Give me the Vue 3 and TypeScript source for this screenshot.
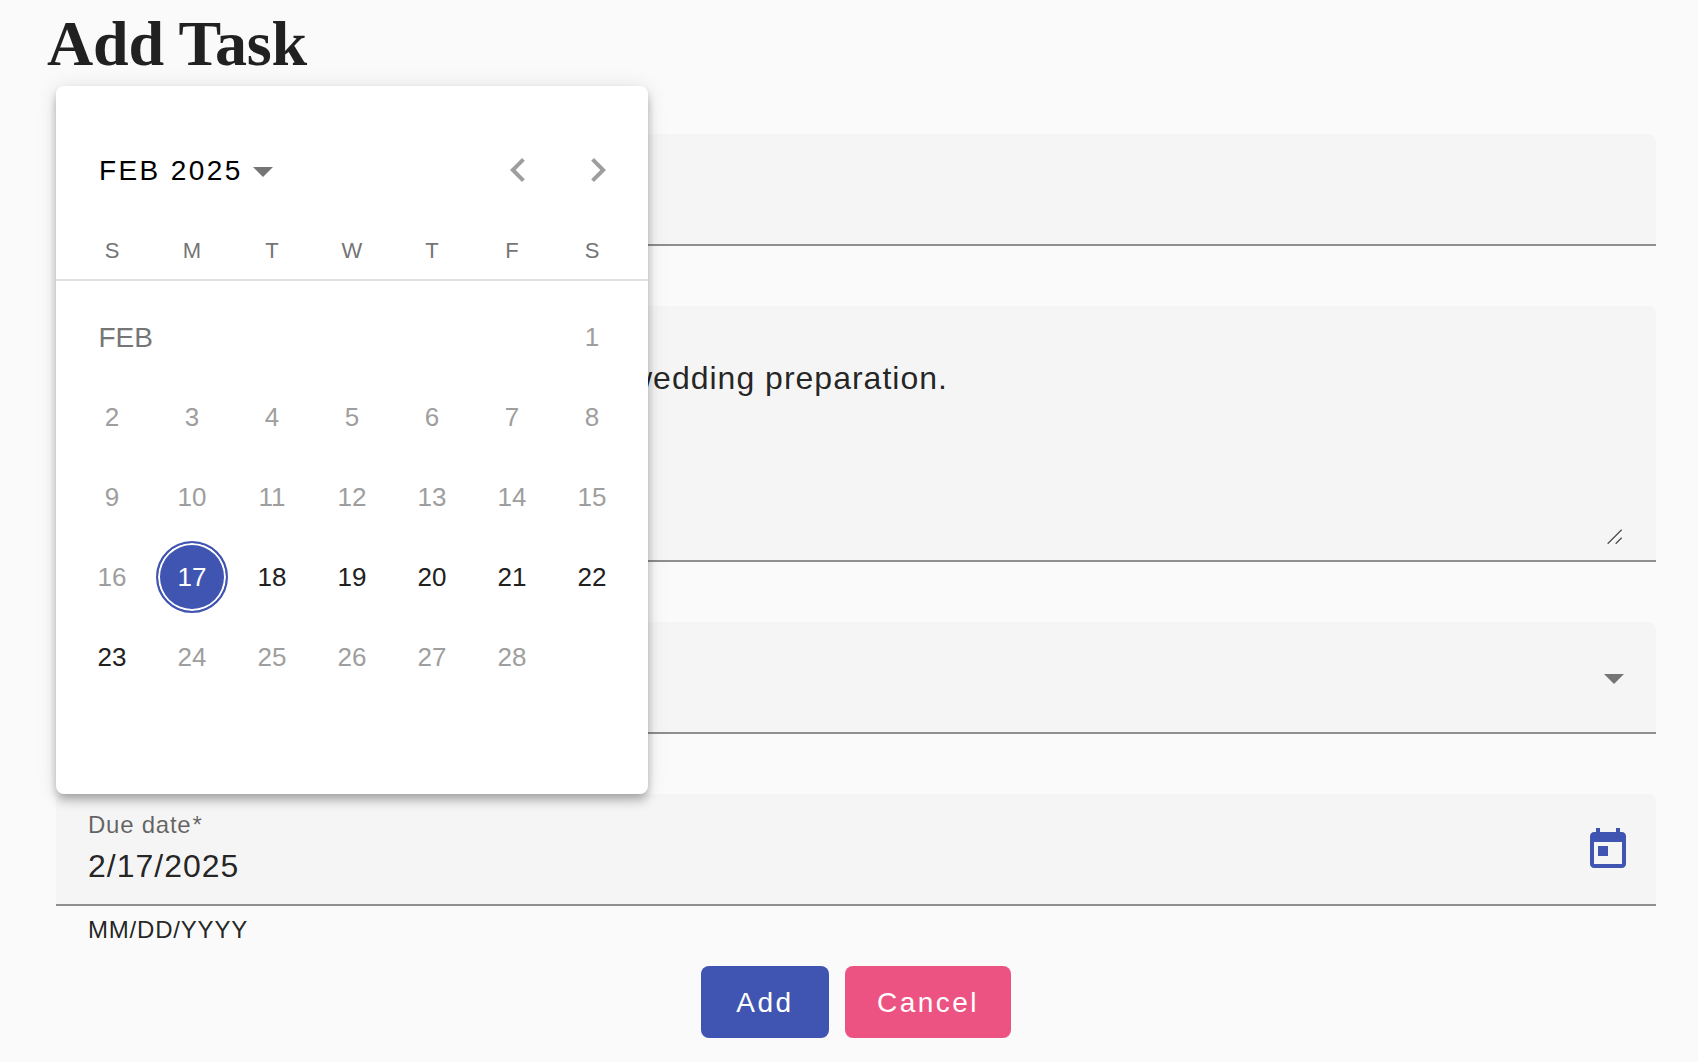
<script setup lang="ts">
interface DayCell {
  day: number
  enabled: boolean
  selected: boolean
}

const weekdays: string[] = ['S', 'M', 'T', 'W', 'T', 'F', 'S']
const today = 17
const lastEnabled = 23

const days: DayCell[] = Array.from({ length: 28 }, (_, i) => {
  const day = i + 1
  return { day, enabled: day >= today && day <= lastEnabled, selected: day === today }
})
</script>

<template>
  <main class="page">
    <h1 class="title">Add Task</h1>

    <form class="form" @submit.prevent>
      <div class="field"></div>

      <div class="field area">
        <p class="area-text">wedding preparation.</p>
        <svg class="grip" width="16" height="16" viewBox="0 0 16 16">
          <path d="M1.9 15.6 15.6 1.9M9.9 15.6 15.6 9.9" stroke="#fff" stroke-width="1.4" />
          <path d="M.7 14.7 14.7.7M8.7 14.7 14.7 8.7" stroke="#555" stroke-width="1.5" />
        </svg>
      </div>

      <div class="field select">
        <svg class="caret" width="20" height="10" viewBox="0 0 20 10"><path d="M0 0h20L10 10z" /></svg>
      </div>

      <div class="field date">
        <div class="date-text">
          <label class="label">Due date<span class="star">*</span></label>
          <span class="value">2/17/2025</span>
        </div>
        <svg class="calendar-icon" width="48" height="48" viewBox="0 0 24 24">
          <path
            d="M19 3h-1V1h-2v2H8V1H6v2H5c-1.11 0-1.99.9-1.99 2L3 19c0 1.1.89 2 2 2h14c1.1 0 2-.9 2-2V5c0-1.1-.9-2-2-2zm0 16H5V8h14v11zM7 10h5v5H7z"
          />
        </svg>
      </div>
      <div class="hint">MM/DD/YYYY</div>

      <div class="actions">
        <button class="btn primary" type="submit">Add</button>
        <button class="btn accent" type="button">Cancel</button>
      </div>
    </form>

    <section class="picker">
      <header class="picker-header">
        <span class="period">FEB 2025</span>
        <svg class="caret" width="20" height="10" viewBox="0 0 20 10"><path d="M0 0h20L10 10z" /></svg>
        <span class="spacer"></span>
        <span class="nav">
          <svg width="48" height="48" viewBox="0 0 24 24">
            <path d="M15.41 7.41 14 6l-6 6 6 6 1.41-1.41L10.83 12z" />
          </svg>
        </span>
        <span class="nav">
          <svg width="48" height="48" viewBox="0 0 24 24">
            <path d="M8.59 16.59 10 18l6-6-6-6-1.41 1.41L13.17 12z" />
          </svg>
        </span>
      </header>
      <div class="weekdays">
        <span v-for="(name, i) in weekdays" :key="i">{{ name }}</span>
      </div>
      <div class="grid">
        <span class="month">FEB</span>
        <span v-for="cell in days" :key="cell.day" class="cell" :class="{ enabled: cell.enabled }">
          <span class="day" :class="{ selected: cell.selected }">{{ cell.day }}</span>
        </span>
      </div>
    </section>
  </main>
</template>

<style>
body {
  margin: 0;
  background: #fafafa;
}
</style>

<style scoped>
.page {
  position: relative;
  box-sizing: border-box;
  height: 1062px;
  overflow: hidden;
  padding: 0 42px 0 56px;
  background: #fafafa;
  color: rgba(0, 0, 0, 0.87);
  font-family: 'Liberation Sans', Arial, sans-serif;
}

.title {
  margin: 0 0 0 -9px;
  padding-top: 7px;
  height: 134px;
  box-sizing: border-box;
  font: 700 64px/74px 'Liberation Serif', 'Times New Roman', serif;
  letter-spacing: -0.2px;
}

.form {
  display: flex;
  flex-direction: column;
}

.field {
  box-sizing: border-box;
  display: flex;
  height: 112px;
  margin-bottom: 60px;
  border-bottom: 2px solid #8e8e8e;
  border-radius: 8px 8px 0 0;
  background: #f5f5f5;
}

.area {
  height: 256px;
  align-items: flex-end;
  padding: 0 33px 15px 573px;
}

.area-text {
  flex: 1;
  align-self: flex-start;
  margin: 48px 0 0;
  font-size: 32px;
  line-height: 48px;
  letter-spacing: 1px;
}

.grip {
  fill: none;
}

.caret {
  fill: #757575;
}

.select {
  align-items: center;
  justify-content: flex-end;
  padding: 4px 32px 0 0;
}

.date {
  margin-bottom: 0;
  justify-content: space-between;
  padding: 0 24px 0 32px;
}

.date-text {
  display: flex;
  flex-direction: column;
  padding-top: 16px;
}

.label {
  font-size: 24px;
  line-height: 30px;
  letter-spacing: 0.75px;
  color: rgba(0, 0, 0, 0.6);
}

.star {
  margin-left: 1px;
}

.value {
  font-size: 32px;
  line-height: 52px;
  letter-spacing: 1px;
}

.calendar-icon {
  margin-top: 32px;
  fill: #4054b2;
}

.hint {
  height: 60px;
  padding-left: 32px;
  font-size: 24px;
  line-height: 47px;
  letter-spacing: 0.8px;
}

.actions {
  display: flex;
  justify-content: center;
  gap: 16px;
}

.btn {
  height: 72px;
  padding: 2px 0 0;
  border: 0;
  border-radius: 8px;
  color: #fff;
  font: 28px/70px 'Liberation Sans', Arial, sans-serif;
  letter-spacing: 2.5px;
}

.primary {
  width: 128px;
  background: #4054b2;
}

.accent {
  width: 166px;
  background: #ed5382;
}

.picker {
  position: absolute;
  top: 86px;
  left: 56px;
  width: 592px;
  height: 708px;
  border-radius: 8px;
  background: #fff;
  box-shadow:
    0 4px 8px -2px rgba(0, 0, 0, 0.2),
    0 8px 10px rgba(0, 0, 0, 0.14),
    0 2px 20px rgba(0, 0, 0, 0.12);
}

.picker-header {
  display: flex;
  align-items: center;
  height: 80px;
  padding: 44px 10px 0 43px;
}

.period {
  padding-top: 2px;
  color: #000;
  font-size: 28px;
  letter-spacing: 2.4px;
}

.picker-header .caret {
  margin: 3px 0 0 10px;
}

.spacer {
  flex: 1;
}

.nav {
  display: flex;
  justify-content: center;
  width: 80px;
}

.nav svg {
  fill: #9e9e9e;
}

.weekdays {
  display: grid;
  grid-template-columns: repeat(7, 80px);
  height: 69px;
  padding: 0 16px;
  border-bottom: 2px solid #e0e0e0;
  color: #757575;
  font-size: 22px;
  line-height: 82px;
  text-align: center;
}

.grid {
  display: grid;
  grid-template-columns: repeat(7, 80px);
  grid-auto-rows: 80px;
  padding: 16px 16px 0;
}

.month {
  grid-column: 1 / 7;
  padding-left: 26.5px;
  color: #757575;
  font-size: 28px;
  line-height: 82px;
}

.cell {
  display: flex;
  align-items: center;
  justify-content: center;
  color: #9e9e9e;
  font-size: 26px;
}

.enabled {
  color: #212121;
}

.day {
  box-sizing: border-box;
  width: 72px;
  height: 72px;
  border-radius: 50%;
  line-height: 72px;
  text-align: center;
}

.selected {
  border: 2px solid #4054b2;
  background: #4054b2;
  box-shadow: inset 0 0 0 2px #fff;
  color: #fff;
  line-height: 68px;
}
</style>
